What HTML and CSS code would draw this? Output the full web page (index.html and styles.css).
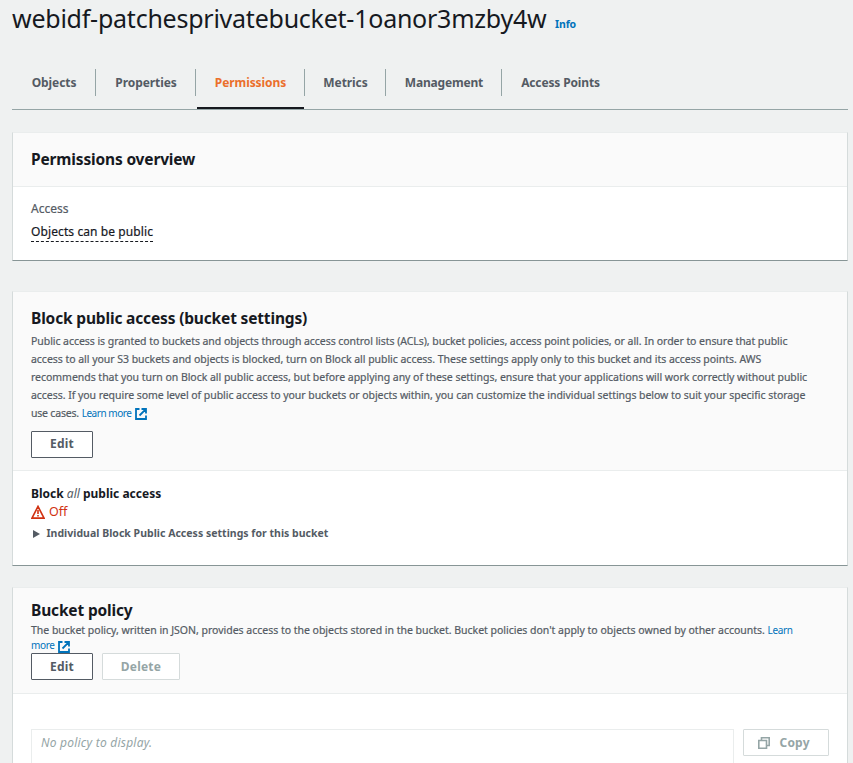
FILE: index.html
```html
<!DOCTYPE html>
<html lang="en">
<head>
<meta charset="utf-8">
<title>Bucket permissions</title>
<link rel="stylesheet" href="styles.css">
</head>
<body>
<main class="page">
  <header class="title-row"><h1>webidf-patchesprivatebucket-1oanor3mzby4w</h1><a class="info">Info</a></header>
  <nav class="tabs">
    <a class="tab t1"><span>Objects</span></a>
    <a class="tab t2"><span>Properties</span></a>
    <a class="tab t3 active"><span>Permissions</span></a>
    <a class="tab t4"><span>Metrics</span></a>
    <a class="tab t5"><span>Management</span></a>
    <a class="tab t6"><span>Access Points</span></a>
  </nav>

  <section class="card overview">
    <div class="card-head"><h2>Permissions overview</h2></div>
    <div class="card-body">
      <div class="label">Access</div>
      <div><span class="status">Objects can be public</span></div>
    </div>
  </section>

  <section class="card block">
    <div class="card-head">
      <h2>Block public access (bucket settings)</h2>
      <p class="desc">
        <span class="p1">Public access is granted to buckets and objects through access control lists (ACLs), bucket policies, access point policies, or all. In order to ensure that public</span><br>
        <span class="p2">access to all your S3 buckets and objects is blocked, turn on Block all public access. These settings apply only to this bucket and its access points. AWS</span><br>
        <span class="p3">recommends that you turn on Block all public access, but before applying any of these settings, ensure that your applications will work correctly without public</span><br>
        <span class="p4">access. If you require some level of public access to your buckets or objects within, you can customize the individual settings below to suit your specific storage</span><br>
        <span class="p5">use cases.</span> <a class="link">Learn more</a><svg class="ext" viewBox="0 0 12 12"><path d="M4.5 1H1v10h10V7.5M6.5 1H11v4.5M10.6 1.4L4.5 7.5"/></svg>
      </p>
      <div class="buttons"><button class="btn edit">Edit</button></div>
    </div>
    <div class="card-body">
      <div class="block-label"><b>Block</b> <i>all</i> <b>public access</b></div>
      <div class="off"><svg class="warn" viewBox="0 0 14 14"><path d="M7 1.4L13 13.1H1Z"/><path d="M7 5v4M7 10v1.6"/></svg><span>Off</span></div>
      <div class="expand"><svg viewBox="0 0 7 8"><path d="M0 0L7 4L0 8Z"/></svg><span>Individual Block Public Access settings for this bucket</span></div>
    </div>
  </section>

  <section class="card policy">
    <div class="card-head">
      <h2>Bucket policy</h2>
      <p class="desc">
        <span class="q1">The bucket policy, written in JSON, provides access to the objects stored in the bucket. Bucket policies don't apply to objects owned by other accounts.</span> <a class="link">Learn</a><br>
        <a class="link">more</a><svg class="ext" viewBox="0 0 12 12"><path d="M4.5 1H1v10h10V7.5M6.5 1H11v4.5M10.6 1.4L4.5 7.5"/></svg>
      </p>
      <div class="buttons"><button class="btn edit">Edit</button><button class="btn delete" disabled>Delete</button></div>
    </div>
    <div class="card-body">
      <div class="editor"><span>No policy to display.</span></div>
      <button class="btn copy" disabled><svg viewBox="0 0 12 12"><path d="M.8 3.5h7.7v7.7H.8ZM3.5 3.5V.8h7.7v7.7H8.5"/></svg><span>Copy</span></button>
    </div>
  </section>
</main>
</body>
</html>
```
FILE: styles.css
```css
* { box-sizing: border-box; }
body { margin: 0; height: 763px; overflow: hidden; background: #eff1f1; color: #16191f; font-family: "Noto Sans", "Open Sans", sans-serif; font-size: 12px; }
h1, h2, p { margin: 0; }
.page { height: 763px; overflow: hidden; padding: 0 5px 0 12px; }
.title-row { display: flex; align-items: baseline; height: 69px; white-space: nowrap; }
h1 { font-size: 25px; font-weight: 400; line-height: 37px; letter-spacing: -0.24px; }
.info { margin-left: 8.5px; color: #0073bb; font-size: 10.5px; font-weight: 700; letter-spacing: -0.1px; }
.tabs { display: flex; height: 41px; border-bottom: 1px solid #95a5a6; }
.tab { display: flex; justify-content: center; height: 27px; padding-left: 1px; line-height: 27px; border-right: 1px solid #95a5a6; color: #545b64; font-size: 12px; font-weight: 700; letter-spacing: -0.08px; white-space: nowrap; }
.t1 { width: 84px; }
.t2 { width: 100px; }
.t3 { width: 109px; position: relative; }
.t4 { width: 81px; }
.t5 { width: 116px; letter-spacing: -0.18px; }
.t6 { width: 116px; border: 0; letter-spacing: -0.15px; }
.active { color: #eb6f2b; }
.active::after { content: ""; position: absolute; left: 1px; right: 0; top: 38px; height: 2px; background: #16191f; }
.card { background: #fff; border: 1px solid #d5dbdb; border-top-color: #eaeded; border-bottom-color: #879596; }
.card-head { background: #fafafa; border-bottom: 1px solid #eaeded; padding: 0 18px; white-space: nowrap; }
.card-body { padding: 0 18px; }
h2 { font-size: 15.5px; font-weight: 700; line-height: 22px; letter-spacing: -0.16px; }
.overview { height: 129px; margin-top: 22px; }
.overview .card-head { height: 54px; padding-top: 15px; }
.overview .card-body { padding-top: 13px; }
.label { color: #545b64; line-height: 18px; }
.status { display: inline-block; margin-top: 5px; height: 19px; line-height: 18px; letter-spacing: 0.1px; border-bottom: 1px dashed #16191f; }
.label, .status, .desc { -webkit-text-stroke-width: 0.2px; }
.block { height: 275px; margin-top: 30px; }
.block .card-head { height: 179px; padding-top: 15px; }
.desc { color: #545b64; font-size: 10.5px; line-height: 18px; }
.block .desc { height: 90px; margin-top: 3px; }
.p1 { letter-spacing: -0.053px; }
.p2, .p3 { letter-spacing: -0.03px; }
.p4 { letter-spacing: -0.045px; }
.p5 { letter-spacing: -0.2px; }
.q1 { letter-spacing: -0.015px; }
.link { color: #0073bb; font-size: 10px; letter-spacing: -0.45px; -webkit-text-stroke-width: 0; }
.policy .link { letter-spacing: -0.35px; }
.ext { width: 12px; height: 12px; margin-left: 3px; vertical-align: -3px; fill: none; stroke: #0073bb; stroke-width: 1.8; }
.buttons { display: flex; gap: 9px; }
.btn { height: 27px; padding: 0; background: #fff; border: 1px solid #545b64; border-radius: 1px; color: #545b64; font: 700 12px/23px "Noto Sans", sans-serif; letter-spacing: 0.2px; }
.btn:disabled { border-color: #d5dbdb; color: #95a5a6; }
.edit { width: 62px; }
.delete { width: 78px; }
.block .buttons { margin-top: 9px; }
.block .btn { padding-bottom: 2px; }
.block .card-body { padding-top: 14px; }
.block-label { line-height: 18px; }
.block-label i { color: #545b64; }
.off { display: flex; color: #d13212; font-size: 12.5px; line-height: 18px; }
.warn { width: 14px; height: 14px; margin: 2px 4px 0 0; fill: none; stroke: #d13212; stroke-width: 1.6; }
.expand { display: flex; margin-top: 3px; color: #545b64; font-size: 10.5px; font-weight: 700; line-height: 18px; letter-spacing: 0.02px; }
.expand svg { width: 7px; height: 8px; margin: 6px 6.5px 0 2px; fill: #545b64; }
.policy { height: 200px; margin-top: 21px; }
.policy .card-head { height: 106px; padding-top: 11px; }
.policy .desc { height: 30px; line-height: 15px; margin-top: 2px; }
.policy .ext { margin-bottom: -1px; }
.policy .card-body { display: flex; justify-content: space-between; padding-top: 35px; }
.editor { width: 703px; height: 80px; padding: 4px 9px; border: 1px solid #eaeded; color: #95a5a6; font-style: italic; line-height: 18px; letter-spacing: 0.23px; }
.copy { display: flex; width: 86px; padding-left: 14px; line-height: 26px; }
.copy svg { width: 12px; height: 12px; margin: 7px 9.5px 0 0; fill: none; stroke: #95a5a6; stroke-width: 1.6; }
```
